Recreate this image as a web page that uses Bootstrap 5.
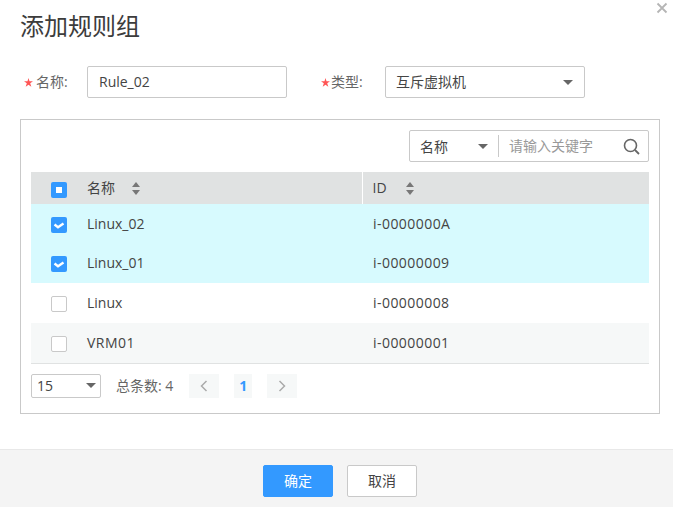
<!DOCTYPE html>
<html lang="zh">
<head>
    <meta charset="UTF-8">
    <meta name="viewport" content="width=device-width, initial-scale=1.0">
    <title>添加规则组</title>
    <link href="https://cdn.jsdelivr.net/npm/bootstrap@5.3.0/dist/css/bootstrap.min.css" rel="stylesheet">
    <style>
        body {
            background: #fff;
            color: #444;
            font-family: "Open Sans", "Noto Sans CJK SC", sans-serif;
            font-size: 14px;
            width: 673px;
            height: 507px;
            overflow: hidden;
            position: relative;
        }
        .close-x { position: absolute; top: 2px; right: 5px; width: 12px; height: 12px; display: block; }
        .dlg-title { font-size: 24px; font-weight: 400; line-height: 32px; margin: 0; padding: 10px 0 0 20px; height: 42px; color: #3c3c3c; }
        .form-line { padding: 24px 0 0 24px; height: 77px; }
        .field-label { color: #666; width: 63px; height: 32px; line-height: 32px; white-space: nowrap; display: flex; align-items: center; gap: 3px; }
        .field-label.second { width: 64px; gap: 1px; }
        .box { height: 32px; width: 200px; border: 1px solid #c9c9c9; border-radius: 2px; padding: 0 11px 0 11px; line-height: 30px; background: #fff; }
        .first-box { margin-right: 34px; }
        .box.type-box { padding: 0 11px 0 10px; }
        .caret-down { width: 0; height: 0; border-left: 5px solid transparent; border-right: 5px solid transparent; border-top: 5px solid #666; }
        .panel { margin: 0 13px 0 20px; height: 295px; border: 1px solid #c9c9c9; padding: 10px; }
        .search-box { width: 240px; height: 32px; border: 1px solid #c9c9c9; border-radius: 2px; }
        .search-type { width: 88px; padding: 0 10px; }
        .search-input { flex: 1; color: #999; border-left: 1px solid #c9c9c9; height: 22px; line-height: 22px; padding-left: 10px; }
        .search-icon { margin-right: 8px; }
        .grid-table { width: 618px; margin: 10px 0 0; table-layout: fixed; border-collapse: collapse; }
        .grid-table th { background: #e0e2e2; height: 32px; font-weight: 400; padding: 0 0 2px; }
        .grid-table td { padding: 0; height: 39.5px; }
        .grid-table .sel-col { width: 56px; text-align: center; }
        .grid-table th.sel-col { padding-bottom: 0; }
        .grid-table .id-col { width: 287px; padding-left: 11px; }
        .grid-table th.id-col { border-left: 1px solid #fff; padding-left: 10px; }
        .grid-table td.id-col, .vm-name { letter-spacing: .45px; }
        .vm-name.plain { letter-spacing: 0; }
        .grid-table .row-on td { background: #d7fafe; }
        .grid-table .row-alt td { background: #f6f8f8; }
        .grid-table .row-end td { border-bottom: 1px solid #e0e2e2; height: 40.5px; }
        .grid-table .row-lift td:not(.sel-col) { padding-bottom: 2px; }
        .grid-table .row-lift-half td:not(.sel-col) { padding-bottom: 1px; }
        .chk { width: 16px; height: 16px; border-radius: 2px; display: block; margin: 2px 0 0 20px; }
        .chk-head { margin-top: 4px; }
        .chk-off { border: 1px solid #c9c9c9; background: #fff; }
        .chk-on { background: #3399ff; }
        .sort-mark { display: inline-flex; flex-direction: column; gap: 3px; margin-left: 17px; vertical-align: 6px; }
        .sort-mark.id-sort { margin-left: 19px; }
        .sort-up { border-left: 4px solid transparent; border-right: 4px solid transparent; border-bottom: 5px solid #777; }
        .sort-down { border-left: 4px solid transparent; border-right: 4px solid transparent; border-top: 5px solid #777; }
        .pager { margin-top: 10px; height: 24px; }
        .page-size { width: 70px; height: 24px; border: 1px solid #c9c9c9; border-radius: 2px; padding: 0 4px 0 5px; }
        .pager-total { color: #666; margin: 0 16px 0 15px; white-space: nowrap; }
        .page-btn { height: 24px; width: 30px; background: #f6f8f8; }
        .page-now { width: 18px; margin: 0 15px; color: #3399ff; font-weight: 700; }
        .dlg-foot { position: absolute; left: 0; right: 0; bottom: 0; height: 58px; background: #f4f4f4; border-top: 1px solid #e8e8e8; gap: 14px; padding: 15px 0 0 7px; }
        .foot-btn { width: 70px; height: 32px; border-radius: 2px; padding: 0; font-size: 14px; line-height: 30px; }
        .foot-ok, .foot-ok:hover { background: #3399ff; border: 1px solid #3399ff; color: #fff; }
        .foot-cancel, .foot-cancel:hover { background: #fff; border: 1px solid #c9c9c9; color: #444; }
    </style>
</head>
<body>
    <svg class="close-x" viewBox="0 0 12 12"><path d="M1.5 1.5L10.5 10.5M10.5 1.5L1.5 10.5" stroke="#b5b5b5" stroke-width="1.8"/></svg>

    <h1 class="dlg-title">添加规则组</h1>

    <div class="form-line d-flex">
        <div class="field-label">
            <svg width="9" height="9" viewBox="0 0 8 8"><path d="M4 0l.9 2.9H8L5.5 4.7l1 3L4 5.9 1.500 7.700l1-3L0 2.900h3.100z" fill="#f55"/></svg>
            <span>名称:</span>
        </div>
        <div class="box first-box">Rule_02</div>
        <div class="field-label second">
            <svg width="9" height="9" viewBox="0 0 8 8"><path d="M4 0l.9 2.9H8L5.5 4.7l1 3L4 5.9 1.500 7.700l1-3L0 2.900h3.100z" fill="#f55"/></svg>
            <span>类型:</span>
        </div>
        <div class="box type-box d-flex align-items-center justify-content-between">
            <span>互斥虚拟机</span>
            <span class="caret-down"></span>
        </div>
    </div>

    <div class="panel">
        <div class="d-flex justify-content-end">
            <div class="search-box d-flex align-items-center">
                <div class="search-type d-flex align-items-center justify-content-between">
                    <span>名称</span>
                    <span class="caret-down"></span>
                </div>
                <div class="search-input">请输入关键字</div>
                <svg class="search-icon" width="17" height="17" viewBox="0 0 17 17"><circle cx="7.5" cy="7.500" r="6" fill="none" stroke="#666" stroke-width="1.6"/><path d="M12 12l4 4" stroke="#666" stroke-width="1.8"/></svg>
            </div>
        </div>

        <table class="grid-table">
            <thead>
                <tr>
                    <th class="sel-col"><span class="chk chk-head chk-on d-flex align-items-center justify-content-center"><svg width="6" height="6"><rect width="6" height="6" fill="#fff"/></svg></span></th>
                    <th>名称<span class="sort-mark"><span class="sort-up"></span><span class="sort-down"></span></span></th>
                    <th class="id-col">ID<span class="sort-mark id-sort"><span class="sort-up"></span><span class="sort-down"></span></span></th>
                </tr>
            </thead>
            <tbody id="gridRows"></tbody>
        </table>

        <div class="pager d-flex align-items-center">
            <div class="page-size d-flex align-items-center justify-content-between">
                <span>15</span>
                <span class="caret-down"></span>
            </div>
            <span class="pager-total">总条数: 4</span>
            <div class="page-btn d-flex align-items-center justify-content-center">
                <svg width="8" height="12" viewBox="0 0 8 12"><path d="M6.5 1L1.500 6l5 5" fill="none" stroke="#aaa" stroke-width="1.5"/></svg>
            </div>
            <div class="page-btn page-now d-flex align-items-center justify-content-center">1</div>
            <div class="page-btn d-flex align-items-center justify-content-center">
                <svg width="8" height="12" viewBox="0 0 8 12"><path d="M1.500 1l5 5-5 5" fill="none" stroke="#aaa" stroke-width="1.5"/></svg>
            </div>
        </div>
    </div>

    <div class="dlg-foot d-flex justify-content-center">
        <button type="button" class="btn foot-btn foot-ok">确定</button>
        <button type="button" class="btn foot-btn foot-cancel">取消</button>
    </div>

    <script src="https://cdn.jsdelivr.net/npm/bootstrap@5.3.0/dist/js/bootstrap.bundle.min.js"></script>
    <script>
        // rows of the grid
        const rows = [
            { name: 'Linux_02', id: 'i-0000000A', on: true },
            { name: 'Linux_01', id: 'i-00000009', on: true, lift: 'row-lift' },
            { name: 'Linux', id: 'i-00000008', on: false, lift: 'row-lift-half' },
            { name: 'VRM01', id: 'i-00000001', on: false, lift: 'row-lift-half', alt: true, wide: true }
        ];
        const tick = '<svg width="12" height="8" viewBox="0 0 12 8"><path d="M1.500 3.500L5 6.200l5.500-3.700" fill="none" stroke="#fff" stroke-width="2.400"/></svg>';
        document.getElementById('gridRows').innerHTML = rows.map(r => `
            <tr class="${r.on ? 'row-on' : ''} ${r.alt ? 'row-alt row-end' : ''} ${r.lift || ''}">
                <td class="sel-col"><span class="chk ${r.on ? 'chk-on d-flex align-items-center justify-content-center' : 'chk-off'}">${r.on ? tick : ''}</span></td>
                <td><span class="vm-name ${r.wide ? '' : 'plain'}">${r.name}</span></td>
                <td class="id-col">${r.id}</td>
            </tr>`).join('');
    </script>
</body>
</html>
